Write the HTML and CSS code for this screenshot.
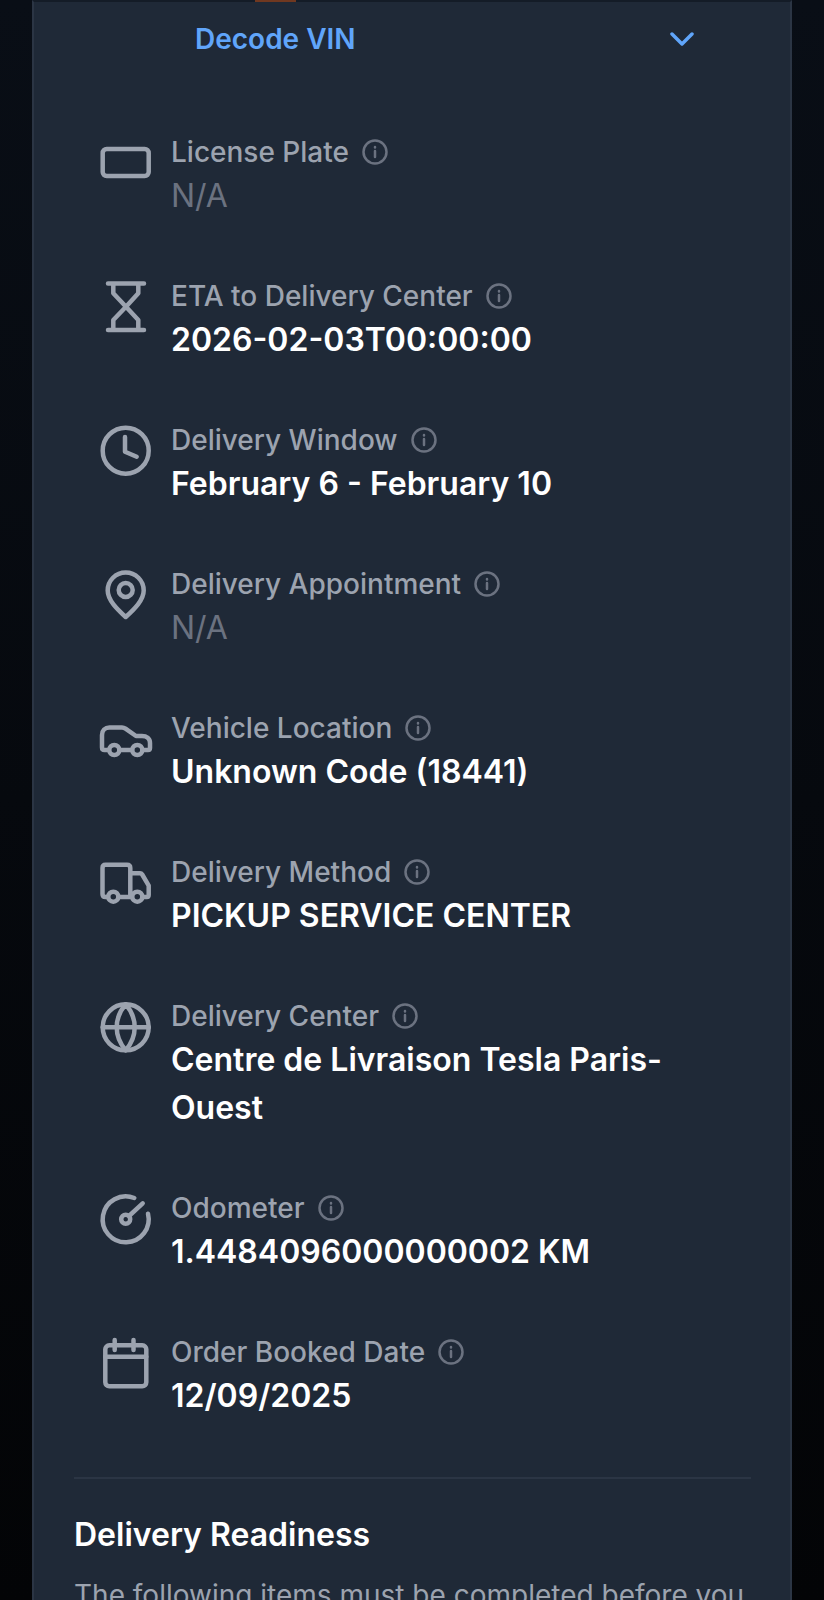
FILE: index.html
```html
<!DOCTYPE html>
<html lang="en">
<head>
    <meta charset="UTF-8">
    <meta name="viewport" content="width=device-width, initial-scale=1.0">
    <title>Order Details</title>
    <link rel="stylesheet" href="styles.css">
</head>
<body>
    <main class="card">
        <div class="top-mark"></div>

        <button class="decode-btn">
            <span>Decode VIN</span>
            <svg class="chevron" viewBox="0 0 24 14"><path d="M2 2l10 10L22 2"/></svg>
        </button>

        <div class="details">
            <div class="row">
                <svg class="icon" viewBox="0 0 56 56"><rect x="4.7" y="14" width="46" height="27" rx="4"/></svg>
                <div class="row-text">
                    <div class="label">License Plate <svg class="info" viewBox="0 0 26 26"><circle cx="13" cy="13" r="11.5"/><path d="M13 12v6M13 8v.5"/></svg></div>
                    <div class="value empty">N/A</div>
                </div>
            </div>

            <div class="row">
                <svg class="icon" viewBox="0 0 56 56"><path d="M10 4.500h36M10 51h36M15.300 5v9.300L28 27.700 40.300 14.300V5M15.300 50v-9L28 27.700 40.300 41v9"/></svg>
                <div class="row-text">
                    <div class="label">ETA to Delivery Center <svg class="info" viewBox="0 0 26 26"><circle cx="13" cy="13" r="11.5"/><path d="M13 12v6M13 8v.5"/></svg></div>
                    <div class="value">2026-02-03T00:00:00</div>
                </div>
            </div>

            <div class="row">
                <svg class="icon" viewBox="0 0 56 56"><circle cx="27.700" cy="27.700" r="23"/><path d="M27 14v14.700l11.700 5"/></svg>
                <div class="row-text">
                    <div class="label">Delivery Window <svg class="info" viewBox="0 0 26 26"><circle cx="13" cy="13" r="11.5"/><path d="M13 12v6M13 8v.5"/></svg></div>
                    <div class="value">February 6 - February 10</div>
                </div>
            </div>

            <div class="row">
                <svg class="icon" viewBox="0 0 56 56"><path d="M27.700 50C19 42 9.700 33 9.700 23.500a18 18 0 0 1 36 0C45.700 33 36.500 42 27.700 50z"/><circle cx="27.700" cy="23" r="7"/></svg>
                <div class="row-text">
                    <div class="label">Delivery Appointment <svg class="info" viewBox="0 0 26 26"><circle cx="13" cy="13" r="11.5"/><path d="M13 12v6M13 8v.5"/></svg></div>
                    <div class="value empty">N/A</div>
                </div>
            </div>

            <div class="row">
                <svg class="icon" viewBox="0 0 56 56"><path d="M10 39H6.500C5 39 4 38 4 36.500V24c0-4.500 3-7.500 7.500-7.500H24c1.500 0 2.500.5 3.500 1.200L38 25h6c4.500 0 8 2.500 8 7v5c0 1.300-.7 2-2 2h-4M22 39h12"/><circle cx="16.300" cy="39" r="5"/><circle cx="39.300" cy="39" r="5"/></svg>
                <div class="row-text">
                    <div class="label">Vehicle Location <svg class="info" viewBox="0 0 26 26"><circle cx="13" cy="13" r="11.5"/><path d="M13 12v6M13 8v.5"/></svg></div>
                    <div class="value">Unknown Code (18441)</div>
                </div>
            </div>

            <div class="row">
                <svg class="icon" viewBox="0 0 56 56"><path d="M9.500 42H7.500c-2 0-3-1-3-3V13c0-2 1-3.300 3-3.300H29c2 0 3.300 1.300 3.300 3.300v26.500M32.300 18.300H42c1 0 1.700.4 2.200 1.200l6.500 11.200v9.300c0 1.300-.7 2-2 2H45M21 42h12"/><circle cx="15.300" cy="41.700" r="5"/><circle cx="39.300" cy="41.700" r="5"/></svg>
                <div class="row-text">
                    <div class="label">Delivery Method <svg class="info" viewBox="0 0 26 26"><circle cx="13" cy="13" r="11.5"/><path d="M13 12v6M13 8v.5"/></svg></div>
                    <div class="value">PICKUP SERVICE CENTER</div>
                </div>
            </div>

            <div class="row">
                <svg class="icon" viewBox="0 0 56 56"><circle cx="27.700" cy="28.300" r="23"/><path d="M27.700 5.300c-12 14-12 32 0 46 12-14 12-32 0-46zM4.700 28.300h46"/></svg>
                <div class="row-text">
                    <div class="label">Delivery Center <svg class="info" viewBox="0 0 26 26"><circle cx="13" cy="13" r="11.5"/><path d="M13 12v6M13 8v.5"/></svg></div>
                    <div class="value">Centre de Livraison Tesla Paris-Ouest</div>
                </div>
            </div>

            <div class="row">
                <svg class="icon" viewBox="0 0 56 56"><path d="M36.300 7A23 23 0 1 0 50 22.800"/><circle cx="27.700" cy="28.300" r="4.500"/><path d="M31 25l13.700-12.700"/></svg>
                <div class="row-text">
                    <div class="label">Odometer <svg class="info" viewBox="0 0 26 26"><circle cx="13" cy="13" r="11.5"/><path d="M13 12v6M13 8v.5"/></svg></div>
                    <div class="value">1.4484096000000002 KM</div>
                </div>
            </div>

            <div class="row">
                <svg class="icon" viewBox="0 0 56 56"><rect x="7.300" y="10.300" width="41" height="41" rx="4"/><path d="M7.300 21.700h41M16.700 5v10M35.500 5v10"/></svg>
                <div class="row-text">
                    <div class="label">Order Booked Date <svg class="info" viewBox="0 0 26 26"><circle cx="13" cy="13" r="11.5"/><path d="M13 12v6M13 8v.5"/></svg></div>
                    <div class="value">12/09/2025</div>
                </div>
            </div>
        </div>

        <section class="readiness">
            <h2>Delivery Readiness</h2>
            <p>The following items must be completed before you can take delivery of your vehicle.</p>
        </section>
    </main>
</body>
</html>
```

FILE: styles.css
```css
html, body { height: 1600px; overflow: hidden; }
body { margin: 0; background: linear-gradient(#090e16, #030406); font-family: 'Inter', sans-serif; color: #fff; }

.card { position: relative; width: 760px; height: 1600px; box-sizing: border-box; margin-left: 32px; padding: 0 39px 0 40px; background: #1f2937; border: solid #2b3544; border-width: 2px 2px 0; border-top-color: #141c27; }
.top-mark { position: absolute; top: -2px; left: 221px; width: 41px; height: 2px; background: #703820; }

.decode-btn { display: flex; justify-content: space-between; align-items: center; width: 100%; box-sizing: border-box; height: 74px; padding: 0 57px 0 121px; background: none; border: 0; color: #60a5fa; font: 600 28px/40px 'Inter', sans-serif; }
.chevron { width: 24px; height: 14px; fill: none; stroke: #60a5fa; stroke-width: 3.500; stroke-linecap: round; stroke-linejoin: round; }

.details { display: flex; flex-direction: column; gap: 56px; margin-top: 56px; padding-left: 24px; }
.row { display: flex; gap: 17px; }
.icon { flex: none; width: 56px; height: 56px; margin-top: 3px; fill: none; stroke: #9ca3af; stroke-width: 4.500; stroke-linecap: round; stroke-linejoin: round; }
.row-text { flex: 1; padding-right: 64px; }
.label { display: flex; align-items: center; gap: 13px; font-size: 28px; line-height: 40px; font-weight: 500; color: #9ca3af; }
.info { width: 26px; height: 26px; fill: none; stroke: #6b7280; stroke-width: 2.500; stroke-linecap: round; }
.value { font-size: 32px; line-height: 48px; font-weight: 600; color: #fff; }
.value.empty { font-weight: 400; color: #6b7280; }

.readiness { margin-top: 57px; padding-top: 36px; border-top: 2px solid #2b3544; }
.readiness h2 { margin: 0; font-size: 32px; line-height: 40px; font-weight: 600; }
.readiness p { margin: 20px 0 0; font-size: 28px; line-height: 40px; color: #9ca3af; }
```
